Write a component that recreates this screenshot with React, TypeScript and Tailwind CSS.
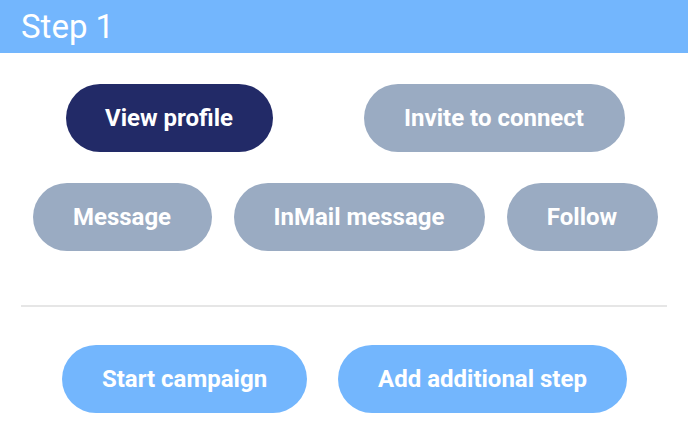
import React from "react";

const base =
  "h-[68px] rounded-full text-white font-bold text-[24px] flex items-center justify-center shrink-0";

export default function App() {
  return (
    <div
      className="w-[688px] h-[438px] bg-white overflow-hidden"
      style={{ fontFamily: "Roboto, 'Liberation Sans', sans-serif" }}
    >
      <div className="h-[53px] bg-[#73b6fd] flex items-center pl-[21px]">
        <span className="text-white text-[33px] leading-none">Step 1</span>
      </div>
      <div className="pt-[31px] flex flex-col">
        <div className="flex justify-center gap-[91px] pl-[2px]">
          <button className={`${base} w-[207px] bg-[#222a67]`}>View profile</button>
          <button className={`${base} w-[261px] bg-[#9aabc2]`}>Invite to connect</button>
        </div>
        <div className="flex justify-center gap-[22px] mt-[31px] pl-[2px]">
          <button className={`${base} w-[179px] bg-[#9aabc2]`}>Message</button>
          <button className={`${base} w-[251px] bg-[#9aabc2]`}>InMail message</button>
          <button className={`${base} w-[151px] bg-[#9aabc2]`}>Follow</button>
        </div>
        <div className="mx-[21px] mt-[54px] h-[2px] bg-[#e6e6e6]" />
        <div className="flex justify-center gap-[31px] mt-[38px] pl-[1px]">
          <button className={`${base} w-[245px] bg-[#73b6fd]`}>Start campaign</button>
          <button className={`${base} w-[289px] bg-[#73b6fd]`}>Add additional step</button>
        </div>
      </div>
    </div>
  );
}
